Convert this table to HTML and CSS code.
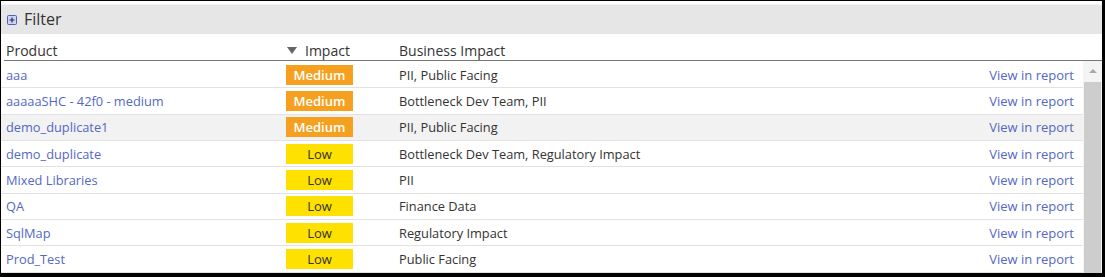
FILE: index.html
```html
<!DOCTYPE html>
<html lang="en">
<head>
  <meta charset="UTF-8">
  <title>Products by impact</title>
  <link rel="stylesheet" href="styles.css">
</head>
<body>
  <div class="frame">
    <!-- Filter bar -->
    <div class="filter-bar">
      <svg class="plus" width="10" height="10" viewBox="0 0 10 10">
        <rect x="0.5" y="0.5" width="9" height="9" rx="1" fill="#cdd3f2" stroke="#4f5fb3"/>
        <path d="M5 2.5v5M2.5 5h5" stroke="#1f2a6e" stroke-width="1.2"/>
      </svg>
      <span>Filter</span>
    </div>

    <!-- Column headers -->
    <div class="head">
      <div class="col-product">Product</div>
      <div class="col-impact"><span class="sort"></span>Impact</div>
      <div class="col-business">Business Impact</div>
      <div></div>
    </div>

    <div class="body">
      <div class="rows">
        <div class="row"><a class="col-product">aaa</a><div class="col-impact"><span class="badge medium">Medium</span></div><div class="col-business">PII, Public Facing</div><a class="view">View in report</a></div>
        <div class="row"><a class="col-product">aaaaaSHC - 42f0 - medium</a><div class="col-impact"><span class="badge medium">Medium</span></div><div class="col-business">Bottleneck Dev Team, PII</div><a class="view">View in report</a></div>
        <div class="row hover"><a class="col-product">demo_duplicate1</a><div class="col-impact"><span class="badge medium">Medium</span></div><div class="col-business">PII, Public Facing</div><a class="view">View in report</a></div>
        <div class="row"><a class="col-product">demo_duplicate</a><div class="col-impact"><span class="badge low">Low</span></div><div class="col-business">Bottleneck Dev Team, Regulatory Impact</div><a class="view">View in report</a></div>
        <div class="row"><a class="col-product">Mixed Libraries</a><div class="col-impact"><span class="badge low">Low</span></div><div class="col-business">PII</div><a class="view">View in report</a></div>
        <div class="row"><a class="col-product">QA</a><div class="col-impact"><span class="badge low">Low</span></div><div class="col-business">Finance Data</div><a class="view">View in report</a></div>
        <div class="row"><a class="col-product">SqlMap</a><div class="col-impact"><span class="badge low">Low</span></div><div class="col-business">Regulatory Impact</div><a class="view">View in report</a></div>
        <div class="row"><a class="col-product">Prod_Test</a><div class="col-impact"><span class="badge low">Low</span></div><div class="col-business">Public Facing</div><a class="view">View in report</a></div>
      </div>
      <div class="scrollbar">
        <div class="scroll-up"><span></span></div>
        <div class="thumb"></div>
      </div>
    </div>
  </div>
</body>
</html>
```

FILE: styles.css
```css
body{
  margin:0;
  font-family:"Open Sans", "Noto Sans", sans-serif;
  font-size:12.8px;
  color:#333;
  background:#fff;
}
.frame{
  width:1105px;
  height:277px;
  box-sizing:border-box;
  border-style:solid;
  border-color:#000;
  border-width:1px 3px 4px 1px;
  overflow:hidden;
}
.filter-bar{
  margin:3px 0 0 0;
  height:30px;
  box-sizing:border-box;
  border-top:1px solid #f2f2f2;
  background:#e6e6e6;
  display:flex;
  align-items:center;
  gap:7px;
  padding:0 0 2px 6px;
  font-size:16px;
  color:#333;
}
.plus{display:block;margin-top:2px;}

.head, .row{
  display:grid;
  grid-template-columns:281px 113px 1fr auto;
  align-items:center;
}
.head{
  height:27px;
  box-sizing:border-box;
  padding:6px 0 0 1px;
  margin-left:3px;
  border-bottom:1px solid #777;
  font-size:14px;
  color:#333;
}
.head .col-product{padding-left:1px;}
.head .col-impact{display:flex;align-items:center;}
.sort{
  width:0;height:0;
  border-left:5px solid transparent;
  border-right:5px solid transparent;
  border-top:7px solid #666;
  margin:0 8px 0 1px;
}

.body{
  display:flex;
  height:212px;
}
.rows{flex:1;padding-top:1px;}
.row{
  height:26.33px;
  box-sizing:border-box;
  border-bottom:1px solid #e2e2e2;
  padding-left:4px;
}
.row.hover{background:#f2f2f2;}
.row .col-product{padding-left:1px;}
a{color:#5468c4;text-decoration:none;cursor:pointer;}
.view{padding-right:9px;font-size:13px;}

.badge{
  display:inline-block;
  width:67px;
  height:20px;
  line-height:20px;
  text-align:center;
  font-size:13px;
}
.badge.medium{background:#f5a11f;color:#fff;font-weight:600;}
.badge.low{background:#ffe100;color:#333;}

.scrollbar{
  width:19px;
  display:flex;
  flex-direction:column;
  background:#f4f4f4;
}
.scroll-up{
  height:19px;
  display:flex;
  justify-content:center;
  align-items:center;
}
.scroll-up span{
  width:0;height:0;
  border-left:4px solid transparent;
  border-right:4px solid transparent;
  border-bottom:4px solid #a8a8a8;
}
.thumb{
  flex:1;
  margin:2px 1px 0 1px;
  background:#cdcdcd;
}
```
